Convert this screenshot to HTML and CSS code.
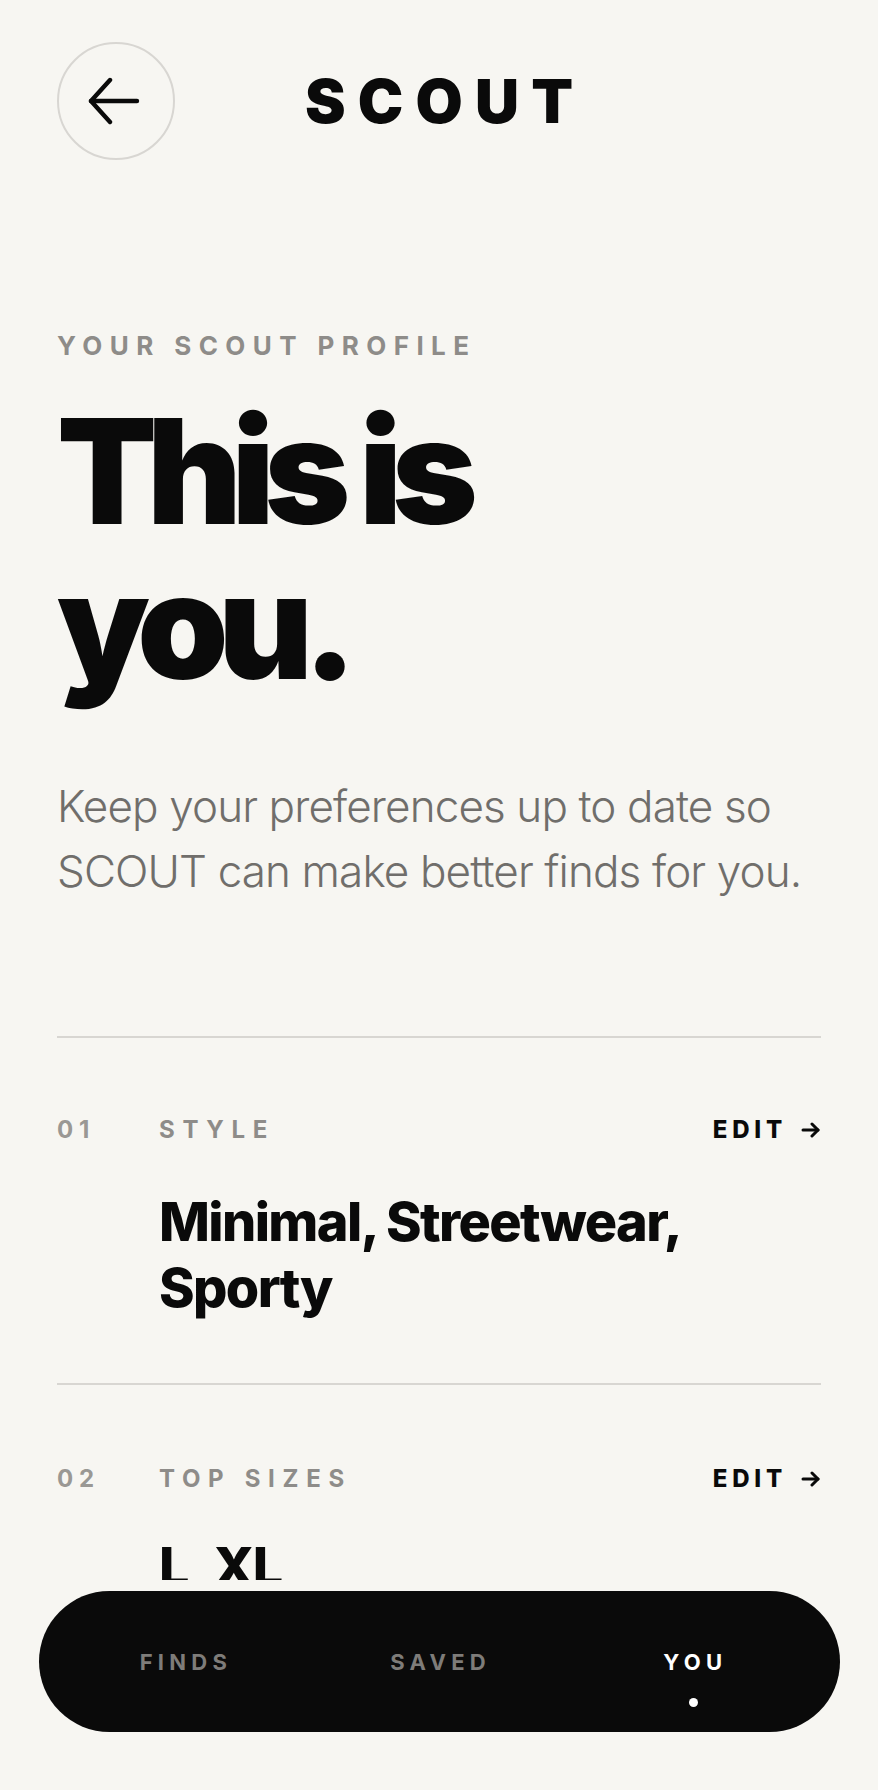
FILE: index.html
```html
<!DOCTYPE html>
<html lang="en">
<head>
    <meta charset="UTF-8">
    <meta name="viewport" content="width=device-width, initial-scale=1.0">
    <title>SCOUT - Profile</title>
    <link rel="stylesheet" href="styles.css">
</head>
<body>
    <div class="page">
        <header class="top-bar">
            <button type="button" class="back-btn" aria-label="Go back">
                <svg width="54" height="48" viewBox="0 0 54 48" fill="none" stroke="#0a0a0a" stroke-width="4.4" stroke-linecap="round" stroke-linejoin="round">
                    <path d="M4 24 H50"/>
                    <path d="M23 3 L4 24 L23 45"/>
                </svg>
            </button>
            <h1 class="brand">SCOUT</h1>
            <span></span>
        </header>

        <section class="intro">
            <p class="eyebrow">Your Scout Profile</p>
            <h2 class="headline">This is<br>you.</h2>
            <p class="lede">Keep your preferences up to date so SCOUT can make better finds for you.</p>
        </section>

        <ul class="pref-list">
            <li class="pref-row">
                <span class="pref-num">01</span>
                <div class="pref-body">
                    <div class="pref-head">
                        <span class="pref-label">Style</span>
                        <a href="#" class="edit-link">Edit
                            <svg width="20" height="16" viewBox="0 0 20 16" fill="none" stroke="#0a0a0a" stroke-width="3" stroke-linecap="round" stroke-linejoin="round">
                                <path d="M2 8 H17"/>
                                <path d="M11 2 L17 8 L11 14"/>
                            </svg>
                        </a>
                    </div>
                    <p class="pref-value">Minimal, Streetwear, Sporty</p>
                </div>
            </li>
            <li class="pref-row">
                <span class="pref-num">02</span>
                <div class="pref-body">
                    <div class="pref-head">
                        <span class="pref-label">Top Sizes</span>
                        <a href="#" class="edit-link">Edit
                            <svg width="20" height="16" viewBox="0 0 20 16" fill="none" stroke="#0a0a0a" stroke-width="3" stroke-linecap="round" stroke-linejoin="round">
                                <path d="M2 8 H17"/>
                                <path d="M11 2 L17 8 L11 14"/>
                            </svg>
                        </a>
                    </div>
                    <p class="pref-value">L, XL</p>
                </div>
            </li>
        </ul>
    </div>

    <div class="tab-dock">
        <nav class="tab-bar">
            <a href="#" class="tab">Finds</a>
            <a href="#" class="tab">Saved</a>
            <a href="#" class="tab active">You</a>
        </nav>
    </div>
</body>
</html>
```

FILE: styles.css
```css
body {
    margin: 0;
    padding: 0;
    background-color: #f7f6f2;
    color: #0a0a0a;
    font-family: Inter, "Noto Sans", sans-serif;
    height: 1790px;
    overflow: hidden;
}

.page {
    padding: 42px 57px 0 57px;
}

/* header */
.top-bar {
    display: grid;
    grid-template-columns: 118px 1fr 118px;
    align-items: center;
}

.back-btn {
    width: 118px;
    height: 118px;
    border: 2px solid #d8d6d2;
    border-radius: 50%;
    background: transparent;
    display: flex;
    align-items: center;
    justify-content: center;
    padding: 0 4px 0 0;
    cursor: pointer;
}

.brand {
    margin: 0;
    text-align: center;
    font-size: 61px;
    font-weight: 900;
    letter-spacing: 0.2em;
    padding-left: 0.2em;
    line-height: 1;
}

/* intro */
.intro {
    margin-top: 170px;
}

.eyebrow {
    margin: 0;
    font-size: 26px;
    line-height: 32px;
    font-weight: 700;
    letter-spacing: 0.285em;
    text-transform: uppercase;
    color: #8e8c89;
}

.headline {
    margin: 32px 0 0 0;
    font-size: 146px;
    line-height: 155px;
    font-weight: 900;
    letter-spacing: -0.07em;
}

.lede {
    margin: 70px 0 0 0;
    font-size: 44px;
    line-height: 65px;
    font-weight: 300;
    color: #706e6b;
    letter-spacing: -0.02em;
}

/* preferences */
.pref-list {
    list-style: none;
    margin: 132px 0 0 0;
    padding: 0;
}

.pref-row {
    display: flex;
    border-top: 2px solid #d8d6d2;
    padding: 77px 0 62px 0;
}

.pref-row + .pref-row {
    padding-top: 79px;
}

.pref-num {
    width: 102px;
    flex-shrink: 0;
    font-size: 24px;
    line-height: 30px;
    font-weight: 700;
    letter-spacing: 0.24em;
    color: #9a9894;
}

.pref-body {
    flex: 1;
}

.pref-head {
    display: flex;
    justify-content: space-between;
    align-items: center;
}

.pref-label {
    font-size: 24px;
    line-height: 30px;
    font-weight: 700;
    letter-spacing: 0.32em;
    text-transform: uppercase;
    color: #8e8c89;
}

.edit-link {
    display: flex;
    align-items: center;
    gap: 14px;
    font-size: 24px;
    line-height: 30px;
    font-weight: 800;
    letter-spacing: 0.2em;
    text-transform: uppercase;
    color: #0a0a0a;
    text-decoration: none;
}

.pref-value {
    margin: 44px 0 0 0;
    font-size: 54px;
    line-height: 66px;
    font-weight: 800;
    letter-spacing: -0.03em;
    max-width: 560px;
}

.pref-row + .pref-row .pref-value {
    margin-top: 40px;
}

/* bottom tabs */
.tab-dock {
    position: fixed;
    left: 0;
    right: 0;
    bottom: 0;
    padding: 11px 38px 58px 39px;
    background-color: #f7f6f2;
}

.tab-bar {
    height: 141px;
    border-radius: 71px;
    background-color: #0a0a0a;
    display: grid;
    grid-template-columns: repeat(3, 1fr);
    align-items: center;
    padding: 0 20px 0 17px;
}

.tab {
    position: relative;
    text-align: center;
    font-size: 22px;
    line-height: 30px;
    font-weight: 700;
    letter-spacing: 0.24em;
    padding-left: 0.24em;
    text-transform: uppercase;
    color: #7e7c79;
    text-decoration: none;
}

.tab.active {
    color: #ffffff;
}

.tab.active::after {
    content: "";
    position: absolute;
    left: 50%;
    top: 51px;
    width: 9px;
    height: 9px;
    margin-left: -4px;
    border-radius: 50%;
    background: #ffffff;
}
```
